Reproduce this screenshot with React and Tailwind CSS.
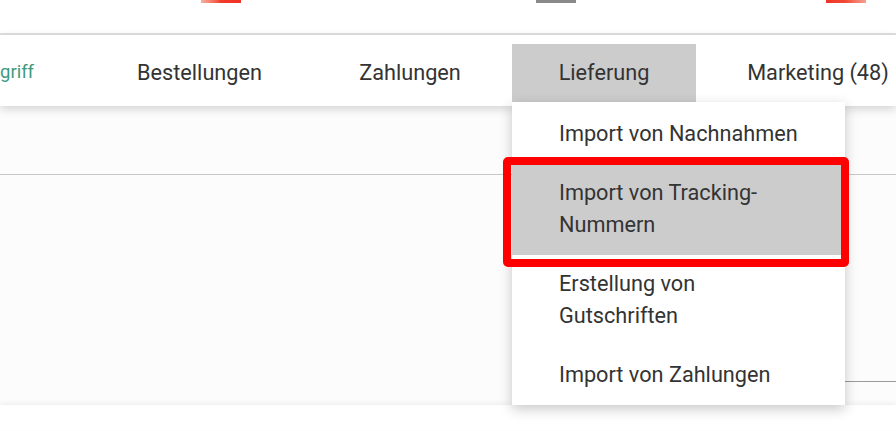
import React from "react";

export default function App() {
  return (
    <div className="w-[896px] h-[431px] overflow-hidden bg-white font-['Roboto',sans-serif] text-[#333]">
      {/* top strip */}
      <div className="h-[33px] flex items-start">
        <div className="ml-[201px] w-[40px] h-[3px] bg-gradient-to-r from-[#f5b0a0] via-[#f03a2a] to-[#f03228]" />
        <div className="ml-[295px] w-[40px] h-[3px] bg-[#8a8a8a]" />
        <div className="ml-[250px] w-[40px] h-[3px] bg-gradient-to-r from-[#f03228] via-[#f04a35] to-[#f3a090]" />
      </div>
      <div className="h-[2px] bg-[#e0e0e0]" />

      {/* nav */}
      <div className="relative z-20 h-[71px] bg-white shadow-[0_3px_9px_rgba(0,0,0,0.17)]">
        <div className="flex items-start pt-[9px] whitespace-nowrap overflow-visible">
          <div className="w-[90px] h-[58px] shrink-0 flex items-center text-[18.5px] text-[#3f9a80]">
            griff
          </div>
          <div className="w-[219px] h-[58px] shrink-0 flex items-center justify-center text-[21.7px]">
            Bestellungen
          </div>
          <div className="ml-[3px] w-[196px] h-[58px] shrink-0 flex items-center justify-center text-[21.7px]">
            Zahlungen
          </div>
          <div className="relative ml-[4px] w-[184px] h-[58px] shrink-0 flex items-center justify-center text-[21.7px] bg-[#cccccc]">
            Lieferung
            <div className="absolute left-0 top-full w-[333px] bg-white pt-[2.5px] pb-[0.5px] shadow-[0_4px_12px_rgba(0,0,0,0.22)] whitespace-normal text-left">
              <div className="py-[13.5px] pl-[47px] pr-[10px] text-[21.7px] leading-[32px] text-[#333]">
                Import von Nachnahmen
              </div>
              <div className="relative mr-[4px] bg-[#cccccc] py-[13.5px] pl-[47px] pr-[10px] text-[21.7px] leading-[32px] text-[#333]">
                Import von Tracking-
                <br />
                Nummern
                <div className="absolute -left-[9px] -right-[8px] -top-[7px] -bottom-[12px] border-[8px] border-[#ff0000] rounded-[5px]" />
              </div>
              <div className="py-[13.5px] pl-[47px] pr-[10px] text-[21.7px] leading-[32px] text-[#333]">
                Erstellung von
                <br />
                Gutschriften
              </div>
              <div className="py-[13.5px] pl-[47px] pr-[10px] text-[21.7px] leading-[32px] text-[#333]">
                Import von Zahlungen
              </div>
            </div>
          </div>
          <div className="ml-[4px] w-[236px] h-[58px] shrink-0 flex items-center justify-center text-[21.7px]">
            Marketing (48)
          </div>
        </div>
      </div>

      {/* content */}
      <div className="relative z-0 h-[299px] bg-[#fcfcfc]">
        <div className="h-[68px]" />
        <div className="h-[1px] bg-[#c8c8c8]" />
        <div className="h-[206px]" />
        <div className="ml-[600px] h-[1px] bg-[#9a9a9a]" />
      </div>
      <div className="relative z-10 h-[25px] bg-white shadow-[0_-2px_5px_rgba(0,0,0,0.06)]" />
    </div>
  );
}
